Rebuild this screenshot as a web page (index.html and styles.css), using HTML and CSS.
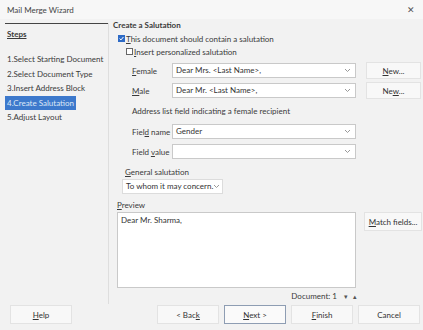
FILE: index.html
```html
<!DOCTYPE html>
<html lang="en">
<head>
  <meta charset="UTF-8" />
  <title>Mail Merge Wizard</title>
  <link rel="stylesheet" href="styles.css">
</head>
<body>

  <div class="window">
    <div class="titlebar">
      <span>Mail Merge Wizard</span>
      <span class="close">&#x2715;</span>
    </div>

    <div class="main">
      <div class="sidebar">
        <div class="steps-title"><u>Steps</u></div>
        <ul class="steps">
          <li><span>1.Select Starting Document</span></li>
          <li><span>2.Select Document Type</span></li>
          <li><span>3.Insert Address Block</span></li>
          <li class="active"><span>4.Create Salutation</span></li>
          <li><span>5.Adjust Layout</span></li>
        </ul>
      </div>

      <div class="content">
        <div class="heading">Create a Salutation</div>

        <label class="check">
          <span class="box checked"><svg width="5" height="5" viewBox="0 0 5 5"><path d="M0.6 2.6 L2 3.9 L4.4 1" fill="none" stroke="#fff" stroke-width="1"/></svg></span>
          <span><u>T</u>his document should contain a salutation</span>
        </label>
        <label class="check sub"><span class="box"></span><span><u>I</u>nsert personalized salutation</span></label>

        <div class="row">
          <span class="lbl"><u>F</u>emale</span>
          <div class="select wide">Dear Mrs. &lt;Last Name&gt;,<svg class="arrow" width="5" height="3" viewBox="0 0 5 3"><path d="M0 0 L2.5 2.5 L5 0" fill="none" stroke="#999"/></svg></div>
          <button class="btn side"><u>N</u>ew...</button>
        </div>
        <div class="row">
          <span class="lbl"><u>M</u>ale</span>
          <div class="select wide">Dear Mr. &lt;Last Name&gt;,<svg class="arrow" width="5" height="3" viewBox="0 0 5 3"><path d="M0 0 L2.5 2.5 L5 0" fill="none" stroke="#999"/></svg></div>
          <button class="btn side">Ne<u>w</u>...</button>
        </div>

        <div class="note">Address list field indicating a female recipient</div>

        <div class="row">
          <span class="lbl">Fiel<u>d</u> name</span>
          <div class="select wide">Gender<svg class="arrow" width="5" height="3" viewBox="0 0 5 3"><path d="M0 0 L2.5 2.5 L5 0" fill="none" stroke="#999"/></svg></div>
        </div>
        <div class="row">
          <span class="lbl">Field <u>v</u>alue</span>
          <div class="select wide"><svg class="arrow" width="5" height="3" viewBox="0 0 5 3"><path d="M0 0 L2.5 2.5 L5 0" fill="none" stroke="#999"/></svg></div>
        </div>

        <div class="general"><u>G</u>eneral salutation</div>
        <div class="select small">To whom it may concern.<svg class="arrow" width="5" height="3" viewBox="0 0 5 3"><path d="M0 0 L2.5 2.5 L5 0" fill="none" stroke="#999"/></svg></div>

        <div class="preview-title"><u>P</u>review</div>
        <div class="preview-row">
          <div class="preview">Dear Mr. Sharma,</div>
          <button class="btn side match"><u>M</u>atch fields...</button>
        </div>
        <div class="doc-nav">Document: 1 <span class="nav">&#9662;</span><span class="nav">&#9652;</span></div>
      </div>
    </div>

    <div class="footer">
      <button class="btn foot"><u>H</u>elp</button>
      <div class="foot-right">
        <button class="btn foot">&lt; Bac<u>k</u></button>
        <button class="btn foot default"><u>N</u>ext &gt;</button>
        <button class="btn foot"><u>F</u>inish</button>
        <button class="btn foot">Cancel</button>
      </div>
    </div>
  </div>

</body>
</html>
```

FILE: styles.css
```css
* { margin: 0; padding: 0; box-sizing: border-box; }
body {
  font-family: Lato, 'Open Sans', sans-serif;
  font-size: 8px;
  color: #3a3a3a;
  background: #f1f1f1;
}
.window {
  width: 423px;
  height: 330px;
  background: #f2f2f2;
  display: flex;
  flex-direction: column;
  overflow: hidden;
}
.titlebar {
  height: 20px;
  padding: 0 8px 0 7px;
  display: flex;
  align-items: center;
  justify-content: space-between;
  background: #f7f7f7;
  color: #444;
}
.close { font-size: 9px; color: #555; }

.main {
  flex: 1;
  display: flex;
}
.sidebar {
  width: 109px;
  flex-shrink: 0;
  margin-top: 4px;
  border-right: 1px solid #dedede;
}
.steps-title {
  margin-left: 5px;
  border-top: 1px solid #444;
  padding: 5px 2px 0;
  height: 29px;
  font-weight: bold;
}
.steps { list-style: none; }
.steps li {
  height: 14.5px;
  line-height: 14px;
  padding-left: 5px;
  white-space: nowrap;
}
.steps li span { padding: 0 2px; }
.steps li.active span {
  display: inline-block;
  height: 14px;
  background: #3d79cc;
  color: #dde8f7;
}

.content {
  flex: 1;
  padding: 0 0 0 4px;
  display: flex;
  flex-direction: column;
}
.heading {
  font-weight: bold;
  height: 13px;
  line-height: 13px;
}
.check {
  display: flex;
  align-items: center;
  height: 13px;
  margin-left: 5px;
}
.check.sub { margin-left: 13px; }
.box {
  width: 7px;
  height: 7px;
  border: 1px solid #666;
  background: #fff;
  margin-right: 1px;
  display: flex;
  align-items: center;
  justify-content: center;
}
.box.checked {
  background: #2e6bc6;
  border-color: #2e6bc6;
}
.row {
  display: flex;
  align-items: center;
  height: 15px;
  margin-top: 5px;
  white-space: nowrap;
}
.lbl {
  width: 59px;
  padding-left: 19px;
  flex-shrink: 0;
}
.select {
  position: relative;
  height: 15px;
  line-height: 13px;
  padding-left: 3px;
  background: #fff;
  border: 1px solid #c9c9c9;
  color: #333;
  white-space: nowrap;
}
.select.wide { width: 184px; flex-shrink: 0; }
.arrow {
  position: absolute;
  right: 5px;
  top: 5px;
}
.btn {
  font-family: inherit;
  font-size: 8px;
  color: #333;
  background: #f8f8f8;
  border: 1px solid #e3e3e3;
  height: 17px;
}
.btn.side {
  width: 55px;
  margin-left: 10px;
  flex-shrink: 0;
}
.btn.match {
  width: 58px;
  height: 19px;
  margin-left: 8px;
}
.note {
  height: 21px;
  line-height: 27px;
  padding-left: 19px;
}
.general {
  height: 19px;
  line-height: 26px;
  padding-left: 12px;
}
.select.small {
  width: 101px;
  margin: 1px 0 0 9px;
  border-color: #dcdcdc;
}
.select.small .arrow { right: 3px; }
.preview-title {
  height: 18px;
  line-height: 22px;
  padding-left: 4px;
}
.preview-row {
  display: flex;
  align-items: flex-start;
  padding-left: 4px;
}
.preview {
  width: 239px;
  height: 76px;
  background: #fff;
  border: 1px solid #c9c9c9;
  padding: 2px 3px;
  color: #333;
}
.doc-nav {
  text-align: right;
  padding-right: 66px;
  height: 16px;
  line-height: 17px;
}
.nav { font-size: 7px; color: #555; margin-left: 5px; }

.footer {
  height: 27px;
  display: flex;
  justify-content: space-between;
  align-items: flex-start;
  padding: 1px 3px 0 10px;
}
.foot-right { display: flex; gap: 5px; }
.btn.foot {
  width: 62px;
  height: 19px;
}
.btn.default { border-color: #8e9db3; background: #fafafa; }
```
